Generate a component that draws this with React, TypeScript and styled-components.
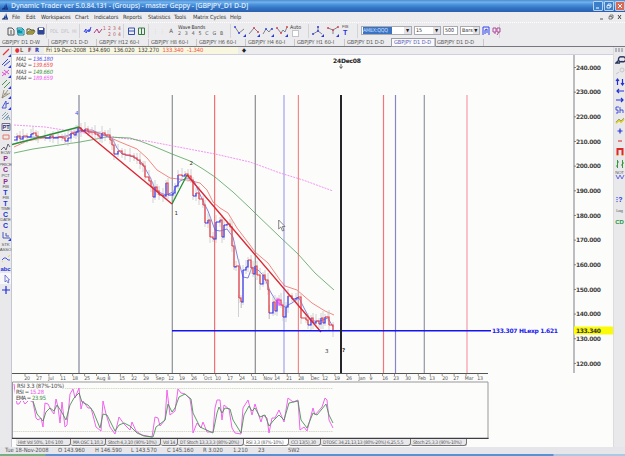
import React from 'react';
import styled, { createGlobalStyle } from 'styled-components';

const GlobalStyle = createGlobalStyle`
  body {
    margin: 0;
    overflow: hidden;
    background: #ececee;
    font-family: 'DejaVu Sans Condensed', 'DejaVu Sans', sans-serif;
    font-size: 6px;
    color: #333;
  }
  svg {
    flex-shrink: 0;
  }
`;

const Window = styled.div`
  width: 625px;
  height: 456px;
  display: flex;
  flex-direction: column;
  overflow: hidden;
  white-space: nowrap;
  background: #ececee;
`;

const TitleBar = styled.div`
  height: 12px;
  flex-shrink: 0;
  display: flex;
  align-items: center;
  gap: 1px;
  padding-left: 2px;
  box-sizing: border-box;
  background: linear-gradient(#4d8ad0 0%, #72b2ee 18%, #4f97dd 35%, #3474c4 65%, #2860b0 100%);
`;

const Title = styled.div`
  flex: 1;
  color: #dceaff;
  font-family: 'Open Sans', 'Noto Sans', sans-serif;
  font-size: 7px;
  font-weight: 600;
  line-height: 12px;
  padding-left: 1px;
  letter-spacing: -0.2px;
`;

const WindowButton = styled.div<{ $close?: boolean }>`
  width: 10px;
  height: 10px;
  border: 1px solid #b9d3ee;
  border-radius: 1px;
  box-sizing: border-box;
  background: ${(p) => (p.$close ? '#d86a58' : '#3b7fcb')};
  display: flex;
`;

const MenuBar = styled.div`
  height: 10px;
  flex-shrink: 0;
  display: flex;
  align-items: center;
  padding: 0 1px 0 2px;
`;

const MenuItem = styled.div<{ $width: number }>`
  width: ${(p) => p.$width}px;
  font-size: 5.7px;
  letter-spacing: -0.1px;
  line-height: 10px;
`;

const MenuEnd = styled.div`
  margin-left: auto;
  display: flex;
  gap: 1px;
`;

const ToolBar = styled.div`
  height: 16px;
  flex-shrink: 0;
  display: flex;
  align-items: center;
  border-top: 1px dotted #fff;
  box-sizing: border-box;
  padding-left: 6px;
`;

const ToolGroup = styled.div<{ $width: number; $gap?: number }>`
  width: ${(p) => p.$width}px;
  height: 14px;
  display: flex;
  align-items: center;
  gap: ${(p) => p.$gap ?? 3}px;
  border-right: 1px solid #d4d4d8;
  box-sizing: border-box;
  margin-right: 3px;
  flex-shrink: 0;
`;

const TinyGrid = styled.div`
  display: grid;
  grid-template-columns: repeat(4, 5px);
  font-size: 5px;
  line-height: 6px;
  color: #b45866;
`;

const Faint = styled.span`
  color: #bfc0c6;
  font-size: 5px;
  letter-spacing: -0.2px;
`;

const WaveBands = styled.div`
  display: flex;
  flex-direction: column;
  align-items: flex-start;
  font-size: 5.2px;
  line-height: 6px;
  letter-spacing: -0.15px;
`;

const WaveRow = styled.div`
  display: flex;
  gap: 4px;
  line-height: 7px;
  color: #555;
`;

const AutoCheck = styled.div`
  display: flex;
  flex-direction: column;
  align-items: center;
  font-size: 5.3px;
  line-height: 5px;
`;

const CheckBox = styled.div`
  width: 7px;
  height: 7px;
  background: #fff;
  border: 1px solid #c4c4c8;
  box-sizing: border-box;
`;

const SelectBox = styled.div<{ $width: number }>`
  width: ${(p) => p.$width}px;
  height: 9px;
  display: flex;
  align-items: center;
  background: #fff;
  border: 1px solid #a9abb1;
  box-sizing: border-box;
  font-size: 5.3px;
  line-height: 7px;
  padding-left: 1px;
  flex-shrink: 0;
`;

const Selected = styled.span`
  background: #3c72c4;
  color: #c8e0ff;
  letter-spacing: -0.2px;
`;

const Arrow = styled.span`
  margin-left: auto;
  width: 7px;
  height: 7px;
  background: #e2e2e6;
  color: #222;
  text-align: center;
  font-size: 4.5px;
`;

const TabRow = styled.div`
  height: 9px;
  flex-shrink: 0;
  display: flex;
  align-items: center;
  box-sizing: border-box;
  border-bottom: 1px solid #77787e;
`;

const ChartTab = styled.div<{ $width: number; $active?: boolean }>`
  width: ${(p) => p.$width}px;
  height: 7px;
  padding-left: 2px;
  box-sizing: border-box;
  border-right: 1px solid #c8c8cc;
  font-size: 5.5px;
  line-height: 7px;
  color: ${(p) => (p.$active ? '#5559b8' : '#555')};
  background: ${(p) => (p.$active ? '#fafafa' : 'transparent')};
  outline: ${(p) => (p.$active ? '0.5px solid #9a9ca8' : 'none')};
`;

const Body = styled.div`
  flex: 1;
  min-height: 0;
  display: flex;
`;

const LeftPalette = styled.div`
  width: 12px;
  display: flex;
  flex-direction: column;
  border-right: 1px solid #c5c6d4;
  box-sizing: border-box;
  background: #e9e9ec;
`;

const PaletteTool = styled.div<{ $height: number; $color?: string; $active?: boolean }>`
  height: ${(p) => p.$height}px;
  flex-shrink: 0;
  display: flex;
  flex-direction: column;
  align-items: center;
  justify-content: center;
  color: ${(p) => p.$color ?? '#2330d8'};
  background: ${(p) => (p.$active ? '#f8f8fa' : 'transparent')};
  font-family: 'Liberation Sans', sans-serif;
  font-weight: bold;
  font-size: 7px;
  line-height: 6px;
`;

const ToolCaption = styled.span`
  color: #555;
  font-weight: normal;
  font-size: 4.4px;
  line-height: 4.5px;
  letter-spacing: -0.2px;
`;

const ToolWord = styled.span`
  font-size: 6px;
  letter-spacing: -0.1px;
`;

const Center = styled.div`
  width: 601px;
  display: flex;
  flex-direction: column;
  background: #fcfcfb;
`;

const InfoBar = styled.div`
  height: 8px;
  flex-shrink: 0;
  display: flex;
  align-items: center;
  background: #ececee;
  border-bottom: 1px solid #cfcfe0;
  box-sizing: border-box;
`;

const InfoCell = styled.div<{ $width: number; $color?: string; $bold?: boolean }>`
  width: ${(p) => p.$width}px;
  flex-shrink: 0;
  color: ${(p) => p.$color ?? '#444'};
  font-weight: ${(p) => (p.$bold ? 'bold' : 'normal')};
  font-size: 5.8px;
  line-height: 7px;
  letter-spacing: -0.1px;
`;

const InfoFields = styled.div`
  width: 192px;
  height: 7px;
  padding-left: 2px;
  display: flex;
  background: #f8f6df;
`;

const IndicatorTabs = styled.div`
  height: 8px;
  flex-shrink: 0;
  display: flex;
  padding-left: 4px;
  background: #fcfcfb;
`;

const IndicatorTab = styled.div<{ $width: number; $active?: boolean }>`
  width: ${(p) => p.$width}px;
  height: 7px;
  padding-left: 2px;
  box-sizing: border-box;
  border-bottom: 1px solid #777;
  border-right: 1px solid #777;
  border-radius: 0 0 3px 2px;
  background: ${(p) => (p.$active ? '#fff' : '#e8e8ea')};
  color: #555;
  font-size: 4.9px;
  letter-spacing: -0.24px;
  line-height: 6px;
`;

const RightPalette = styled.div`
  width: 12px;
  display: flex;
  flex-direction: column;
  background: #e9e9ec;
  border-left: 1px solid #dcdce0;
  box-sizing: border-box;
`;

const Grip = styled.div`
  height: 4px;
  margin: 1px 1px 2px;
  background: repeating-linear-gradient(90deg, #b4b5bb 0 2px, #e6e6e8 2px 3px);
`;

const StatusBar = styled.div`
  height: 7px;
  flex-shrink: 0;
  display: flex;
  align-items: center;
  padding-left: 5px;
  background: #e6e6ea;
`;

const StatusCell = styled.div<{ $width: number }>`
  width: ${(p) => p.$width}px;
  line-height: 7px;
  font-size: 5.8px;
  letter-spacing: -0.05px;
  color: #555;
`;

const TaskBar = styled.div`
  height: 2px;
  flex-shrink: 0;
  background: linear-gradient(90deg, #72b184 0 45px, #5792d7 46px 553px, #a9c9e5 554px);
`;

type Point = [number, number];

const menus: [string, number][] = [
  ['File', 14], ['Edit', 15], ['Workspaces', 34], ['Chart', 19], ['Indicators', 29], ['Reports', 25],
  ['Statistics', 26], ['Tools', 19], ['Matrix Cycles', 37], ['Help', 20],
];

const chartTabs: [string, number][] = [
  ['GBPJPY  D1 D-W', 49], ['GBPJPY  D1 D-D', 48], ['GBPJPY  H12 60-I', 52], ['GBPJPY  H8 60-I', 48], ['GBPJPY  H6 60-I', 49],
  ['GBPJPY  H4 60-I', 49], ['GBPJPY  H1 60-I', 50], ['GBPJPY  D1 D-D', 47], ['GBPJPY  D1 D-D', 43], ['GBPJPY  D1 D-D', 49],
];

const price: Point[] = [
  [14, 140], [17, 136], [20, 139], [23, 136], [27, 137], [31, 134], [33, 133], [36, 136], [38, 137], [45, 138], [50, 136],
  [53, 138], [58, 137], [62, 138], [65, 141], [68, 138], [71, 133], [74, 135], [76, 132], [78, 128], [81, 131], [85, 129],
  [88, 132], [92, 132], [95, 134], [98, 136], [100, 138], [102, 133], [105, 135], [108, 135], [110, 140], [112, 145],
  [114, 154], [118, 151], [122, 154], [125, 155], [130, 156], [134, 158], [137, 160], [140, 164], [143, 166], [145, 177],
  [149, 181], [151, 187], [153, 197], [155, 187], [157, 191], [159, 195], [163, 196], [166, 183], [168, 195], [173, 193],
  [175, 186], [178, 175], [182, 176], [185, 174], [188, 176], [191, 180], [193, 196], [196, 193], [199, 199], [203, 205],
  [205, 223], [208, 220], [210, 237], [213, 239], [216, 222], [220, 220], [222, 237], [224, 225], [227, 224], [230, 227],
  [232, 246], [234, 267], [236, 266], [239, 298], [241, 302], [243, 270], [246, 267], [248, 260], [251, 268], [253, 274],
  [255, 266], [257, 275], [260, 284], [263, 275], [265, 280], [268, 290], [269, 313], [273, 302], [275, 311], [277, 300],
  [279, 300], [281, 305], [283, 317], [286, 307], [288, 296], [292, 299], [296, 298], [298, 297], [301, 318], [306, 320],
  [308, 325], [311, 318], [313, 323], [316, 321], [319, 324], [321, 318], [323, 323], [325, 317], [328, 317], [329, 325], [333, 331],
];

const ma1 =
  'M14 137 L30 137 L50 138 L66 136 L78 131 L92 130 L103 135 L112 138 L117 148 L122 154 L134 157 L142 163 L150 177 L156 191 L166 195 L173 192 L180 181 L187 178 L194 181 L202 199 L208 211 L215 230 L220 231 L227 229 L233 237 L238 259 L243 277 L248 278 L252 267 L258 270 L264 276 L270 291 L276 301 L284 307 L292 303 L299 298 L304 308 L311 321 L320 321 L328 318 L333 327';
const ma2 =
  'M14 147 L27 141 L43 138 L67 137 L75 132 L83 131 L100 133 L120 142 L137 149 L147 158 L157 170 L170 178 L187 180 L200 183 L207 190 L213 202 L220 208 L228 213 L237 228 L250 245 L255 252 L268 263 L280 280 L285 286 L297 290 L312 303 L325 311 L334 315';
const ma3 =
  'M14 153 L33 149 L53 146 L80 142 L107 137 L130 138 L140 141 L153 146 L172 154 L190 161 L203 169 L215 177 L233 192 L250 208 L255 213 L280 237 L298 254 L315 273 L325 282 L334 290';
const ma4 = 'M14 125 L45 127 L70 131 L100 135 L120 138 L147 141 L173 146 L215 154 L250 162 L280 173 L303 180 L333 191';

const rsi =
  '14,384 17,404 19,404 22,399 25,404 29,400 33,402 36,418 38,420 41,418 43,427 45,403 48,404 51,410 54,414 56,399 58,407 60,423 62,402 65,427 67,425 70,394 73,389 75,398 79,388 81,409 83,401 88,408 91,408 96,427 101,431 103,401 106,414 110,427 115,434 119,417 124,424 130,430 132,422 136,431 142,435 152,437 155,417 158,418 160,426 165,420 167,390 170,415 175,411 178,389 181,393 185,394 190,399 192,412 193,433 197,423 201,428 203,422 207,432 213,432 215,408 217,400 220,400 222,420 224,405 229,409 232,428 235,433 241,434 243,408 248,400 252,415 255,404 261,422 263,415 267,418 269,433 272,418 275,418 279,410 284,422 288,398 293,402 298,400 300,430 304,427 307,431 313,408 315,415 322,407 325,398 327,400 329,420 333,428';
const ema =
  '33,401 37,414 43,421 46,412 50,408 54,411 57,405 61,411 66,420 70,405 74,398 79,393 82,402 88,405 93,411 100,428 103,414 107,415 115,431 119,425 124,423 130,426 137,433 144,436 153,437 156,427 160,424 165,420 168,404 172,412 175,408 179,397 185,394 191,399 193,413 200,427 213,433 217,413 219,407 222,413 225,408 230,409 233,420 241,433 244,415 249,406 252,411 255,408 260,417 265,415 269,426 273,421 279,415 284,420 289,403 298,401 301,420 307,428 313,413 317,415 326,404 329,415 333,423';

const timeLabels: [string, number][] = [
  ['20', 27], ['27', 39], ['Jul', 51], ['11', 63], ['18', 75], ['25', 87], ['Aug', 101], ['8', 109], ['15', 122], ['22', 134],
  ['29', 146], ['Sep', 160], ['12', 171], ['19', 182], ['26', 194], ['Oct', 208], ['10', 218], ['17', 230], ['24', 242],
  ['31', 254], ['Nov', 268], ['14', 277], ['21', 289], ['28', 301], ['Dec', 315], ['12', 325], ['19', 337], ['26', 349],
  ['Jan', 362], ['9', 371], ['16', 385], ['23', 396], ['30', 408], ['Feb', 422], ['13', 432], ['20', 445], ['27', 456],
  ['Mar', 469], ['13', 480],
];

const verticals: [number, string, number][] = [
  [79, '#85859a', 1.2], [172.3, '#8e8e98', 1.2], [214.6, '#f57070', 1.2], [255.3, '#8b8b90', 1.2], [284, '#a9a9ee', 1.3],
  [298.4, '#f48888', 1.2], [383.5, '#ee7777', 1.2], [395.5, '#8585c8', 1.2], [424.3, '#9595a5', 1.2], [467, '#f69aaa', 1.2],
];

const scale = [240, 230, 220, 210, 200, 190, 180, 170, 160, 150, 140, 130, 120];
const averages: [string, string, string][] = [
  ['MA1', '136.180', '#4d4de8'], ['MA2', '139.659', '#f05050'], ['MA3', '149.660', '#459445'], ['MA4', '189.659', '#ef5fef'],
];

const indicatorTabs: [string, number][] = [
  ['Hist Vol 50%, 10 6 100', 55], ['MA OSC 1,10,3', 35], ['Stoch 4,3,10 (90%-10%)', 55], ['Vol 14', 17],
  ['DT Stoch 13,3,3,3 (80%-20%)', 66], ['RSI 3,3 (87%-10%)', 45], ['CCI 13(5),30', 32],
  ['DTOSC 34,21,13,13 (80%-20%) 6,25,5,5', 90], ['Stoch 25,3,3 (90%-10%)', 56],
];

const status: [string, number][] = [
  ['Tue 18-Nov-2008', 53], ['O 143.960', 37], ['H 146.590', 36], ['L 143.570', 36], ['C 145.160', 36], ['R 3.020', 30],
  ['1.210', 25], ['23', 30], ['SW2', 40],
];

interface GlyphProps {
  d: string;
  color?: string;
  width?: number;
  height?: number;
  stroke?: number;
  corner?: boolean;
  children?: React.ReactNode;
}

const Glyph: React.FC<GlyphProps> = ({ d, color = '#2330d8', width = 10, height = 10, stroke = 1, corner, children }) => (
  <svg width={width} height={height} viewBox={`0 0 ${width} ${height}`}>
    <path d={d} fill="none" stroke={color} strokeWidth={stroke} />
    {corner && <path d={`M${width} ${height - 3}V${height}H${width - 3}Z`} fill="#2736e0" />}
    {children}
  </svg>
);

const WaveTool: React.FC<{ d: string; color: string; dots: Point[] }> = ({ d, color, dots }) => (
  <svg width="12" height="12" viewBox="0 0 12 12">
    <path d={d} fill="none" stroke="#667" strokeWidth="0.8" />
    {dots.map(([x, y]) => (
      <circle key={`${x}-${y}`} cx={x} cy={y} r="1" fill={color} />
    ))}
    <path d="M12 9V12H9Z" fill="#2736e0" />
  </svg>
);

const AppMark = () => (
  <svg width="7" height="8" viewBox="0 0 7 8">
    <path d="M1 7L3 3V7ZM3 6L4 1L6 7Z" fill="#153f9e" />
    <path d="M0 7H6" stroke="#12255d" />
  </svg>
);

const PriceChart = () => (
  <svg width="601" height="384" viewBox="12 55 601 384" fontFamily="'DejaVu Sans', sans-serif">
    <rect x="12" y="55" width="601" height="384" fill="#fcfcfb" />
    {averages.map(([name, value, color], i) => (
      <g key={name} fontFamily="'DejaVu Sans Condensed', sans-serif" fontSize="5.8" fontStyle="italic">
        <text x="16" y={61 + i * 6.3} fill="#555" textLength="16">{name} =</text>
        <text x="33" y={61 + i * 6.3} fill={color} textLength="20">{value}</text>
      </g>
    ))}
    {verticals.map(([x, color, w]) => (
      <line key={x} x1={x} x2={x} y1="95" y2="373" stroke={color} strokeWidth={w} />
    ))}
    <path d={ma4} fill="none" stroke="#f07af0" strokeWidth="0.8" strokeDasharray="2 1" />
    <path d={ma3} fill="none" stroke="#55a05a" strokeWidth="0.8" />
    <path d={ma2} fill="none" stroke="#f06a62" strokeWidth="0.8" />
    <path d={ma1} fill="none" stroke="#6262da" strokeWidth="0.8" />
    {price.slice(1).map(([x, y], i) => (
      <line key={x} x1={x} x2={x} y1={Math.min(y, price[i][1]) - 3 - (i % 3) * 2} y2={Math.max(y, price[i][1]) + 3 + (i % 4)} stroke="#c6c6c8" strokeWidth="0.8" />
    ))}
    <path d="M238.500 295V317M269.500 305V319M241.500 300V308" stroke="#c6c6c8" strokeWidth="0.8" />
    {price.slice(1).map(([x, y], i) => (
      <path key={x} d={`M${price[i][0]} ${price[i][1]}H${x}V${y}`} fill="none" stroke={y < price[i][1] ? '#3434ee' : '#e63945'} strokeWidth="1.2" />
    ))}
    <path d="M277 305V299H279V305H282" fill="none" stroke="#f348f3" strokeWidth="1.2" />
    <path d="M12 144.500L79 127M172 204L187 175" fill="none" stroke="#259034" strokeWidth="1.3" />
    <path d="M79 127L172 204M187 175L321 332" fill="none" stroke="#da2836" strokeWidth="1.4" />
    <path d="M172 330.700H491" stroke="#1414ef" strokeWidth="1.6" />
    <path d="M341 95V373" stroke="#252529" strokeWidth="2" />
    <path d="M341 64V68M339.500 66.500L341 68.500L342.500 66.500" fill="none" stroke="#444" strokeWidth="0.8" />
    <text x="333" y="63" fontSize="6" fontWeight="bold" fill="#222" textLength="28">24Dec08</text>
    <g fontSize="5.5" fill="#333">
      <text x="75" y="115" fill="#5555e8">4</text>
      <text x="174.500" y="215">1</text>
      <text x="189.500" y="165">2</text>
      <text x="325" y="353">3</text>
      <text x="342" y="352" fontWeight="bold">?</text>
    </g>
    <path d="M278.700 220V229L280.800 227L282.500 231L284 230.300L282.300 226.500H285Z" fill="#fff" stroke="#555" strokeWidth="0.7" />
    <text x="492" y="333" fontSize="6" fontWeight="bold" fill="#2020ee" textLength="66">133.307 HLexp 1.621</text>

    <path d="M574 55V373" stroke="#a8a8ae" strokeWidth="1.5" />
    {scale.map((v, i) => (
      <g key={v}>
        <path d={`M574 ${67.5 + i * 24.66}H576`} stroke="#555" strokeWidth="0.7" />
        <text x="576" y={69.8 + i * 24.66} fontSize="6" fontWeight="bold" fill="#444" textLength="25">{v}.000</text>
      </g>
    ))}
    <rect x="574" y="326.500" width="39" height="8" fill="#fbfb08" />
    <text x="576" y="332.800" fontSize="6" fontWeight="bold" fill="#333" textLength="25">133.340</text>

    <path d="M12 373.500H488" stroke="#555" />
    {timeLabels.map(([label, x], i) => (
      <g key={x}>
        <path d={`M${25 + i * 11.92} 373V376`} stroke="#666" strokeWidth="0.7" />
        <text x={x} y="380" fontSize="5.2" fill="#555" textAnchor="middle" fontFamily="'DejaVu Sans Condensed'" letterSpacing="-0.1">{label}</text>
      </g>
    ))}

    <path d="M12 388.500H333M12 431.500H333" stroke="#c9c9b6" strokeWidth="0.7" strokeDasharray="1.5 0.7" />
    <polyline points={rsi} fill="none" stroke="#f263ee" strokeWidth="1" />
    <polyline points={ema} fill="none" stroke="#489454" strokeWidth="0.9" />
    <rect x="15" y="383" width="50" height="6.500" fill="#fcfcfb" />
    <rect x="15" y="389" width="31" height="12" fill="#fcfcfb" />
    <g fontSize="5.8" fill="#444" fontFamily="'DejaVu Sans Condensed', sans-serif">
      <text x="17" y="388" textLength="47">RSI 3.3 (87%-10%)</text>
      <text x="16" y="394" textLength="13">RSI =</text>
      <text x="30" y="394" fill="#f050ee" textLength="14">15.28</text>
      <text x="16" y="400" textLength="15">EMA =</text>
      <text x="32" y="400" fill="#3e9347" textLength="14">23.95</text>
    </g>
    <path d="M12.500 439V382H488V439" fill="none" stroke="#98989c" />
    <path d="M12 438.400H488.500" stroke="#3e3e44" strokeWidth="1.2" />
  </svg>
);

const App: React.FC = () => {
  return (
    <>
      <GlobalStyle />
      <Window>
        <TitleBar>
          <AppMark />
          <Title>Dynamic Trader ver 5.0.84.131 - (Groups) - master Geppy - [GBPJPY_D1 D-D]</Title>
          <WindowButton>
            <Glyph width={8} height={8} d="M2 6H5" color="#fff" />
          </WindowButton>
          <WindowButton>
            <Glyph width={8} height={8} d="M3 3V2H6V5H5M2 3.500H5V6H2Z" color="#fff" stroke={0.8} />
          </WindowButton>
          <WindowButton $close>
            <Glyph width={8} height={8} d="M2 2L6 6M6 2L2 6" color="#fff" />
          </WindowButton>
        </TitleBar>

        <MenuBar>
          <MenuItem $width={10}><AppMark /></MenuItem>
          {menus.map(([label, width]) => (
            <MenuItem key={label} $width={width}>{label}</MenuItem>
          ))}
          <MenuEnd>
            <Glyph width={8} height={8} d="M2 6H5" color="#555" />
            <Glyph width={8} height={8} d="M3 3V2H6V5H5M2 3.500H5V6H2Z" color="#555" stroke={0.7} />
            <Glyph width={8} height={8} d="M2 2L5 6M5 2L2 6" color="#444" />
          </MenuEnd>
        </MenuBar>

        <ToolBar>
          <ToolGroup $width={41} $gap={0}>
            <Glyph d="M2 2H6L8 4V9H2ZM4 5H6M4 7H6" color="#555" />
            <Glyph d="M1 2H6L8 4V9H2Z" color="#127f91">
              <path d="M2 3H7V8H2Z" fill="#28c4d5" />
              <path d="M3 7V4M5 7V5" stroke="#164d68" />
            </Glyph>
            <Glyph d="M1 8V3H4L5 4H8V5M1 8L3 5H9L7 8Z" color="#54511e">
              <path d="M3 5H9L7 8H1Z" fill="#9b9638" />
            </Glyph>
            <Glyph d="M2 2H8V8H2Z" color="#222d6d">
              <path d="M2 2H8V8H2Z" fill="#2f4595" />
              <path d="M3 2H7V4H3Z" fill="#fff" />
            </Glyph>
          </ToolGroup>
          <ToolGroup $width={30}>
            <Faint>PDL</Faint>
            <Faint>DFL</Faint>
            <Faint>HI</Faint>
          </ToolGroup>
          <ToolGroup $width={41} $gap={0}>
            <Glyph d="M1 6L3 3V7L5 4L6 6L8 1M5 4H8" color="#3142ee" />
            <Glyph d="M1 7L4 3L6 7L9 3" color="#b33b86" />
            <TinyGrid>
              <span>1</span><span>2</span><span>3</span><span>4</span>
              <span /><span>2</span><span>0</span><span>4</span>
            </TinyGrid>
          </ToolGroup>
          <ToolGroup $width={22} $gap={1}>
            <Glyph width={9} d="M1.500 2H7.500V8.500H1.500ZM1.500 5H7.500" color="#344fb0" />
            <Glyph width={9} d="M1.500 2H7.500V8.500H1.500ZM4.500 2V8" color="#317b3c" />
          </ToolGroup>
          <ToolGroup $width={79} $gap={5}>
            <Faint>&nbsp;⋮ &nbsp;⋮</Faint>
            <WaveRow>A</WaveRow>
            <WaveBands>
              Wave Bands
              <WaveRow>
                {'2345CGB'.split('').map((c) => <span key={c}>{c}</span>)}
              </WaveRow>
            </WaveBands>
          </ToolGroup>
          <ToolGroup $width={75} $gap={2}>
            <WaveTool color="#3344e8" d="M1 2L5 8L10 4" dots={[[1, 2], [5, 8]]} />
            <WaveTool color="#dd4550" d="M1 9L6 3L10 7" dots={[[6, 3], [10, 7]]} />
            <WaveTool color="#3344e8" d="M1 9L4 4L7 7L10 3" dots={[[4, 4], [10, 4]]} />
            <WaveTool color="#dd4550" d="M1 3L5 8L7 5L9 7L11 2" dots={[[1, 3], [5, 8], [11, 2]]} />
            <AutoCheck>Auto<CheckBox /></AutoCheck>
          </ToolGroup>
          <ToolGroup $width={46}>
            <WaveTool color="#3344e8" d="M1 9L6 6L10 9M6 6V1" dots={[[6, 2], [6, 6], [1, 9]]} />
            <WaveTool color="#dd4550" d="M1 3L6 5L11 2M6 5V9" dots={[[1, 3], [6, 5], [11, 2]]} />
            <PaletteTool $height={12}><ToolCaption>FIB</ToolCaption>T</PaletteTool>
          </ToolGroup>
          <SelectBox $width={51}><Selected>AMEX:QQQ&nbsp; &nbsp;</Selected><Arrow>▼</Arrow></SelectBox>
          <ToolGroup $width={88} $gap={2}>
            <Faint />
            <SelectBox $width={27}>15<Arrow>▼</Arrow></SelectBox>
            <SelectBox $width={15}>500</SelectBox>
            <SelectBox $width={20}>Bars<Arrow>▼</Arrow></SelectBox>
            <Glyph width={8} d="M1 9V1H7V9M3 8V4L5 3V7" color="#3142ee" />
            <Glyph width={9} d="M1 2H4V6H1ZM5 2H8V6H5ZM3 6V8M7 6L5 9" color="#b04a9a" />
          </ToolGroup>
        </ToolBar>

        <TabRow>
          {chartTabs.map(([label, width], i) => (
            <ChartTab key={i} $width={width} $active={i === 8}>{label}</ChartTab>
          ))}
        </TabRow>

        <Body>
          <LeftPalette>
            <PaletteTool $height={10}><Glyph corner d="M2 8L8 2" color="#e33740" stroke={1.3} /></PaletteTool>
            <PaletteTool $height={11}><Glyph corner d="M1 7L7 1M3 8L9 3" color="#3344d8" /></PaletteTool>
            <PaletteTool $height={10}><Glyph corner d="M1 8L8 2M1 4L5 7M3 2L8 6" color="#e24bd8" /></PaletteTool>
            <PaletteTool $height={11}><Glyph corner d="M1 6L6 1M3 9L9 3" color="#409648" /></PaletteTool>
            <PaletteTool $height={10}><Glyph corner d="M1 9L3 1M1 9L7 1M1 9L9 4M3 5H7" color="#85805e" stroke={0.8} /></PaletteTool>
            <PaletteTool $height={11}><Glyph corner d="M1 8L5 1V8H1M5 4L8 3" color="#4857d7" /></PaletteTool>
            <PaletteTool $height={11}><Glyph d="M1 5L5 1M1 8L7 2M3 9L8 4M6 6V9M6 6H8L9 9" color="#548396" stroke={0.7} /></PaletteTool>
            <PaletteTool $height={11}>
              <Glyph d="M1 1.500H9V8.500H1Z" color="#6d6d85">
                <text x="1.500" y="7.200" fontSize="5.500" fontWeight="bold" fill="#303080">PT</text>
              </Glyph>
            </PaletteTool>
            <PaletteTool $height={10}><Glyph d="M2 3H8V7H2Z" color="#e97868" /></PaletteTool>
            <PaletteTool $height={9}><Glyph d="M0 8L3 5L5 8L7 2L9 5" color="#445" stroke={0.8} /></PaletteTool>
            <PaletteTool $height={11} $color="#94268d"><ToolCaption>ECW</ToolCaption>P</PaletteTool>
            <PaletteTool $height={12} $color="#94268d"><ToolCaption>PRICE</ToolCaption>C</PaletteTool>
            <PaletteTool $height={11} $color="#94268d"><ToolCaption>PCT</ToolCaption>P</PaletteTool>
            <PaletteTool $height={11}><ToolCaption>FIB</ToolCaption>T</PaletteTool>
            <PaletteTool $height={11}><ToolCaption>FIB</ToolCaption>T</PaletteTool>
            <PaletteTool $height={11}><ToolCaption>TIME</ToolCaption>C</PaletteTool>
            <PaletteTool $height={11}><ToolCaption>DATE</ToolCaption>C</PaletteTool>
            <PaletteTool $height={13}><Glyph corner d="M2 1V7H9M5 2V5H8" color="#4857b5" /></PaletteTool>
            <PaletteTool $height={11}><ToolCaption>STK</ToolCaption><ToolCaption>ASSO</ToolCaption></PaletteTool>
            <PaletteTool $height={11}>
              <Glyph d="M1 6L3 4H5L7 6H9" color="#4554dd"><path d="M1 8L2 7M7 3L9 1" stroke="#e7d843" /></Glyph>
            </PaletteTool>
            <PaletteTool $height={9}><ToolWord>abc</ToolWord></PaletteTool>
            <PaletteTool $height={11} $active><Glyph d="M4 1V8L5.500 6.500L7 9L8 8.500L7 6H8.500Z" color="#5562cc" stroke={0.8} /></PaletteTool>
            <PaletteTool $height={11}><Glyph d="M5 1V9M1 5H9" stroke={1.2} /></PaletteTool>
          </LeftPalette>

          <Center>
            <InfoBar>
              <InfoCell $width={3} />
              <InfoCell $width={5} $color="#e82d35">●</InfoCell>
              <InfoCell $width={8} $color="#7c632e" $bold>L</InfoCell>
              <InfoCell $width={7} $color="#8a2939" $bold>F</InfoCell>
              <InfoCell $width={9} $color="#2930ac" $bold>R</InfoCell>
              <InfoFields>
                <InfoCell $width={43}>Fri 19-Dec-2008</InfoCell>
                <InfoCell $width={24.500}>134.690</InfoCell>
                <InfoCell $width={24.500}>136.020</InfoCell>
                <InfoCell $width={24.500}>132.270</InfoCell>
                <InfoCell $width={24.500} $color="#f05045">133.340</InfoCell>
                <InfoCell $width={24} $color="#f05045">-1.340</InfoCell>
              </InfoFields>
              <InfoCell $width={4} />
              <InfoCell $width={10} $color="#222">◆</InfoCell>
            </InfoBar>
            <PriceChart />
            <IndicatorTabs>
              {indicatorTabs.map(([label, width], i) => (
                <IndicatorTab key={label} $width={width} $active={i === 5}>{label}</IndicatorTab>
              ))}
            </IndicatorTabs>
          </Center>

          <RightPalette>
            <Grip />
            <PaletteTool $height={11}><Glyph d="M7 2A2.500 2.500 0 1 0 7 6.500A2.500 2.500 0 1 0 7 2M4 5L1 8H5" color="#26345e" stroke={1.4} /></PaletteTool>
            <PaletteTool $height={12}><Glyph d="M7 2A2 2 0 1 0 7 6A2 2 0 1 0 7 2M4 6L1 8" color="#c4c5ca" /></PaletteTool>
            <PaletteTool $height={10}><Glyph d="M2.500 8V2M1 4L2.500 2L4 4M7.500 2V8M6 6L7.500 8L9 6" stroke={1.2} /></PaletteTool>
            <PaletteTool $height={8}><Glyph height={8} d="M9 4H2M4 2L2 4L4 6" stroke={1.2} /></PaletteTool>
            <PaletteTool $height={10}><Glyph height={8} d="M1 4H8M6 2L8 4L6 6" stroke={1.2} /></PaletteTool>
            <PaletteTool $height={10}><Glyph d="M1 8H3V5H1V2H4M5 2V8M5 5H8V8" stroke={0.8} /></PaletteTool>
            <PaletteTool $height={11}>
              <Glyph d="M1 7L4 4L6 6L9 3" color="#ddcf20" stroke={1.8}><path d="M1 6L4 3L6 5L9 2" fill="none" stroke="#888" strokeWidth="0.7" /></Glyph>
            </PaletteTool>
            <PaletteTool $height={10}><Glyph d="M5 2.500V7.500M2.500 5H7.500" stroke={1.2} /></PaletteTool>
            <PaletteTool $height={10}><Glyph d="M3 5H7" color="#e33c3c" stroke={1.2} /></PaletteTool>
            <PaletteTool $height={12}>
              <Glyph d="M2.500 8V2H7.500V8" color="#de2929" stroke={2}><path d="M1.500 8.500H3.500M6.500 8.500H8.500" stroke="#f4ba30" /></Glyph>
            </PaletteTool>
            <PaletteTool $height={12}><Glyph d="M2.500 1V9M1 7H2.500M2.500 3H4M7.500 1V9M6 6H7.500M7.500 4H9" color="#319b38" /></PaletteTool>
            <PaletteTool $height={11} $color="#a65361">
              <ToolCaption>NOT</ToolCaption>
              <Glyph height={5} d="M1 0L3 4L5 0L7 4L9 0" color="#6868df" />
            </PaletteTool>
            <PaletteTool $height={13} />
            <PaletteTool $height={12}>⁝?</PaletteTool>
            <PaletteTool $height={10} $color="#555"><ToolCaption>Log</ToolCaption></PaletteTool>
            <PaletteTool $height={12} $color="#24953a"><ToolWord>CD</ToolWord></PaletteTool>
          </RightPalette>
        </Body>

        <StatusBar>
          {status.map(([label, width]) => (
            <StatusCell key={label} $width={width}>{label}</StatusCell>
          ))}
        </StatusBar>
        <TaskBar />
      </Window>
    </>
  );
};

export default App;
